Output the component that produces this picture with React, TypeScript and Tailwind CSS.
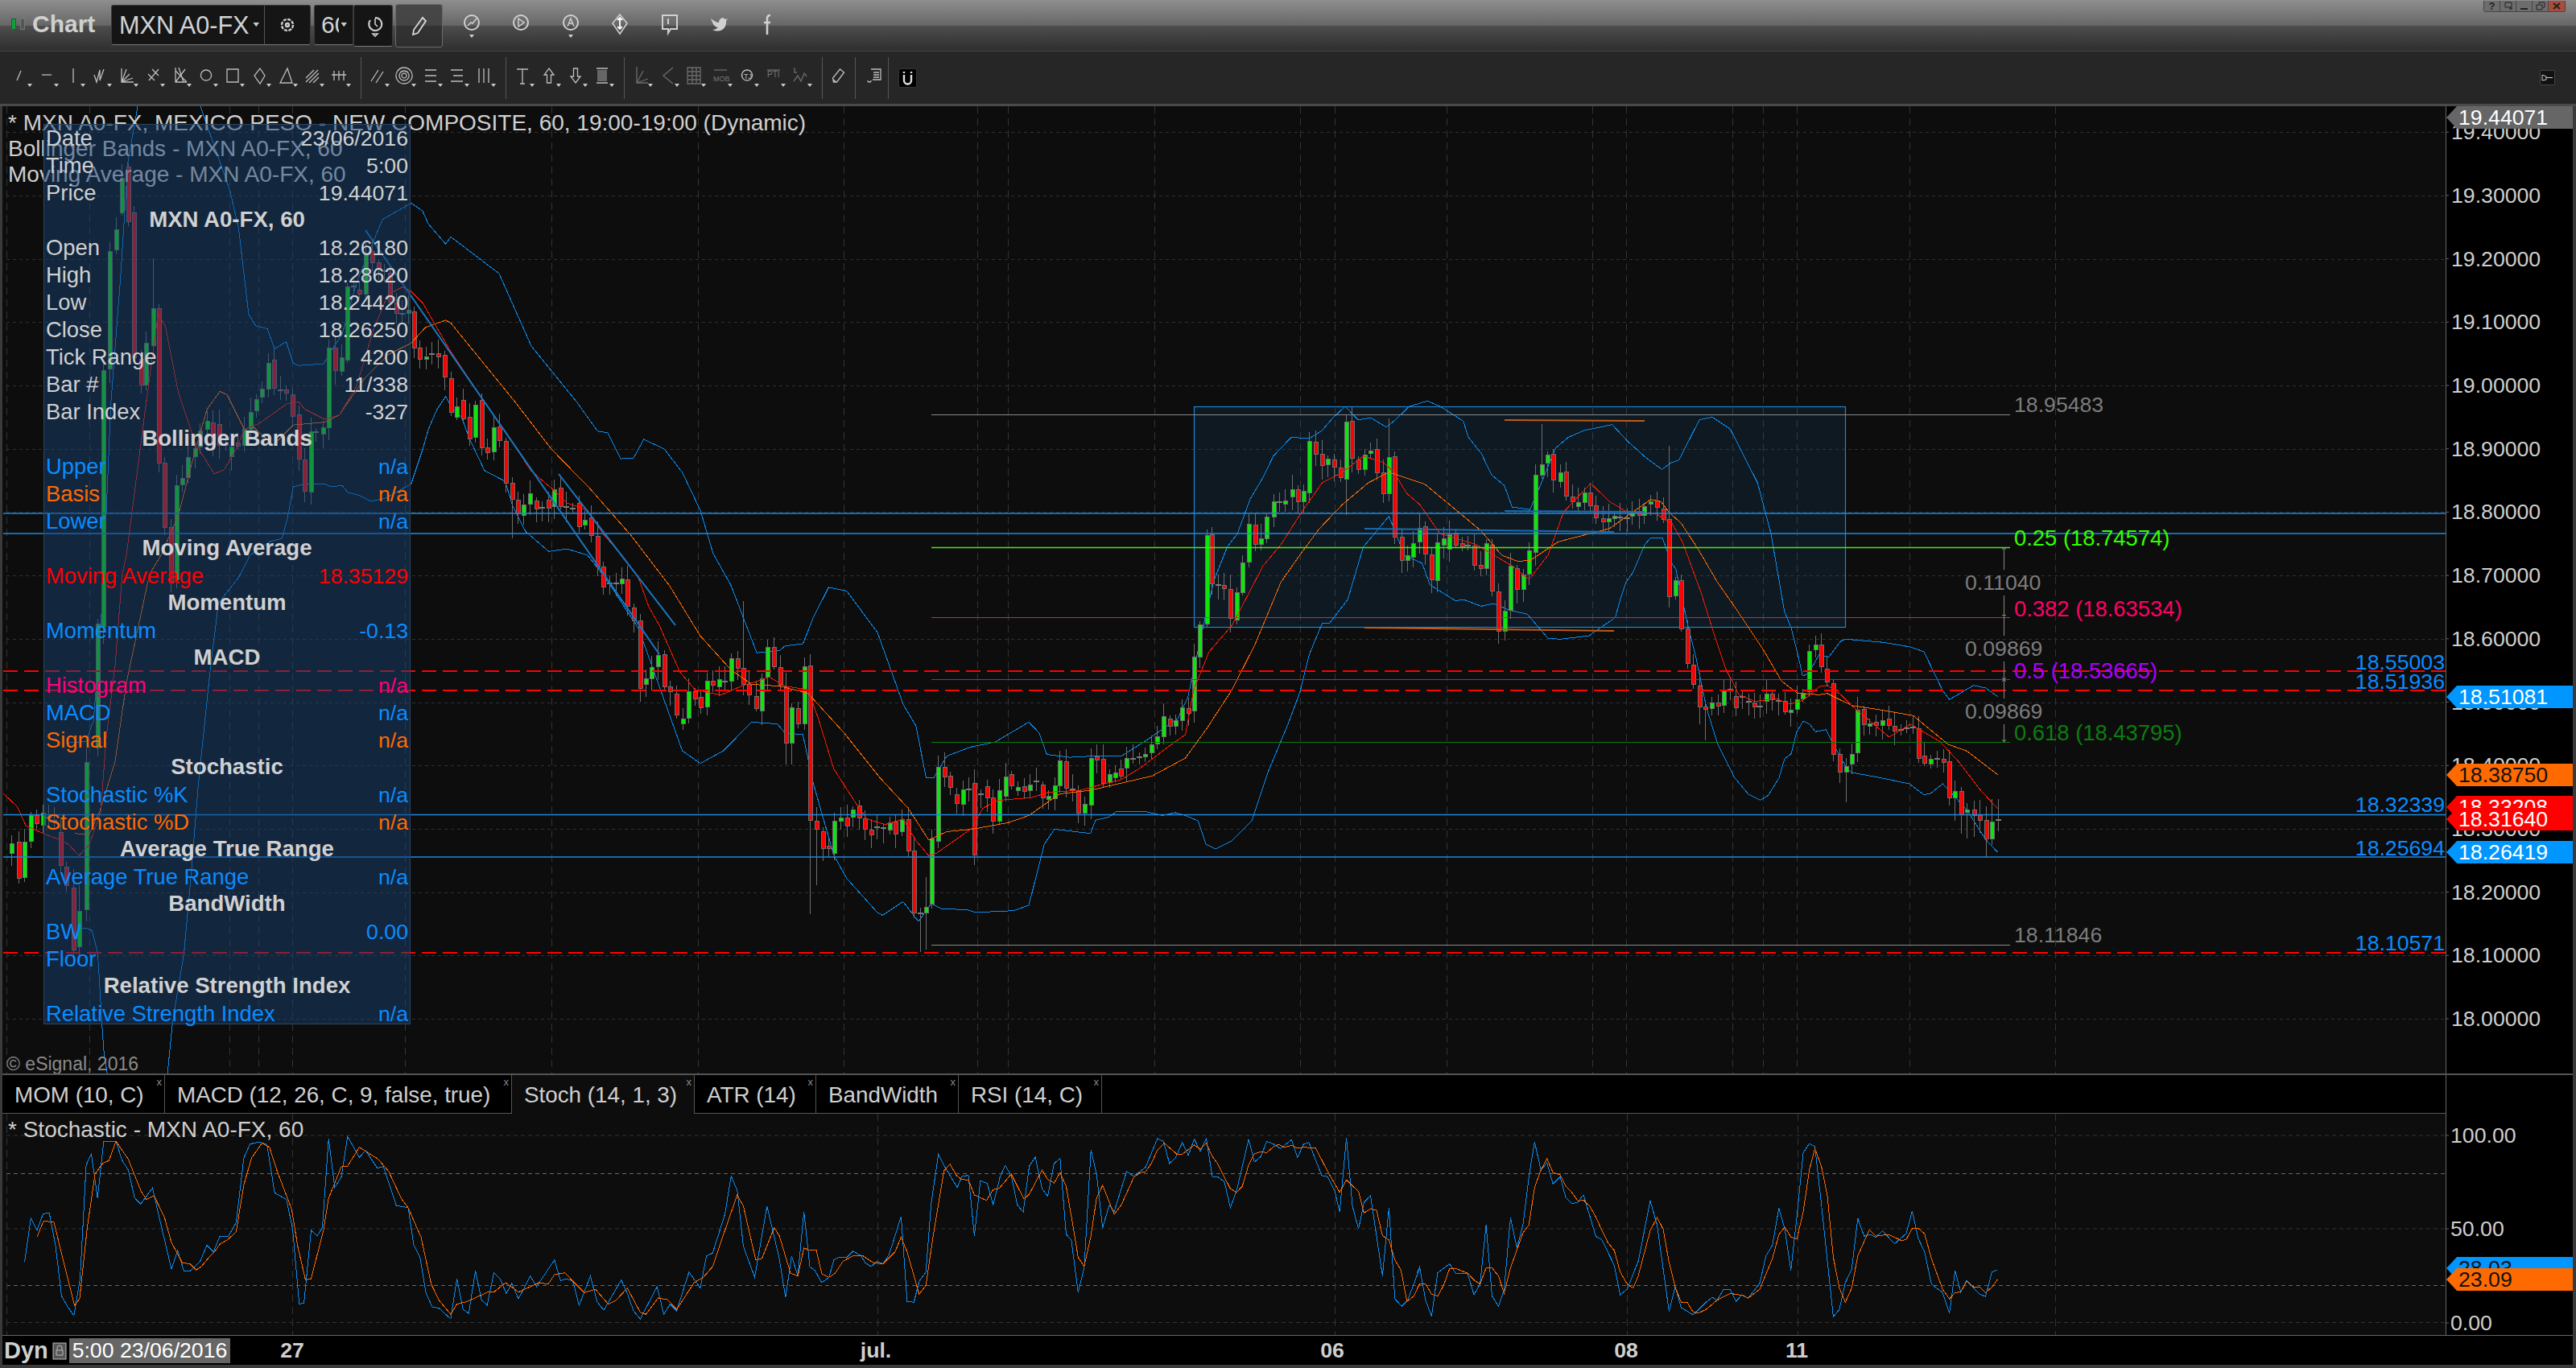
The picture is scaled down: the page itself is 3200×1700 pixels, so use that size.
import React from "react";

const m = (ox: number, oy: number, sx: number, sy: number, a: number[]) => {
  const r: string[] = [];
  for (let i = 0; i + 1 < a.length; i += 2) r.push(`${(ox + a[i] / sx).toFixed(1)},${(oy + a[i + 1] / sy).toFixed(1)}`);
  return r;
};
const Z2 = (a: number[]) => m(0, 130, 2.8, 2.8, a);
const Z3 = (a: number[]) => m(0, 690, 2.8, 2.53, a);
const Z9 = (a: number[]) => m(500, 500, 1.568, 2.24, a);
const Z7 = (a: number[]) => m(1400, 460, 1.568, 3, a);
const Z12 = (a: number[]) => m(2000, 600, 3, 3, a);
const S5 = (a: number[]) => m(0, 1300, 1.568, 3, a);
const S10 = (a: number[]) => m(1000, 1380, 2.01, 3, a);
const S11 = (a: number[]) => m(1760, 1380, 2.01, 3, a);

const upper = [
  ...Z3([235,590,300,585,325,520,345,300,360,80]),
  ...Z2([385,1050,420,590,445,200,480,0]),
  "210,60",
  ...Z2([695,0,800,300,830,430,865,730,890,770,930,780,955,850,995,825,1020,900,1040,908,1125,902,1150,860,1190,800,1240,620,1330,400,1430,343,1470,370,1490,415,1550,485,1568,460]),
  "620,340","660,430",
  ...Z9([340,0,360,40,380,80,400,85,425,157,450,155,470,103,510,130,545,195,580,300,605,420,640,510,690,697,735,690,745,678,780,672,800,600,830,515,865,525,925,640,945,720,975,840,1000,900,1020,1045,1035,1045,1060,985,1105,960,1155,945,1220,890,1240,920,1255,980,1300,988,1340,985,1400,985,1450,940,1510,880,1530,820]),
  ...Z7([140,1030,155,900,170,780,195,660,215,610,240,480,265,400,285,320,320,250,355,255,380,225,400,180,425,135,450,185,475,178,505,212,520,190,550,135,585,115,610,135,655,190,665,250,690,310,710,390,735,430,750,510,785,520,805,430,835,290,860,250,890,225,945,203,975,265,1010,325,1042,370,1060,345,1075,335,1115,185,1140,175,1175,220]),
  ...Z12([550,0,600,190,650,480,675,540,700,640,718,720,740,710,780,640,815,650,860,590,880,583,1020,595,1120,612,1170,630,1240,775,1265,808,1355,755,1400,765,1445,797]),
].join(" ");

const lower = [
  ...Z3([280,1175,300,1172,320,1180,340,1250,355,1480,362,1568]),
  "135,1345","170,1400","207,1345",
  ...Z3([600,1470,640,1250,665,1000,690,720,730,370,760,150,830,70,870,0]),
  ...Z2([940,1520,980,1510,1000,1440,1020,1330,1060,1320,1130,1320,1150,1330,1190,1325,1210,1350,1250,1360,1290,1380,1340,1370,1430,1320,1470,1200,1490,1130,1520,1060,1550,1015,1568,1050]),
  ...Z9([105,30,115,40,130,100,160,190,200,220,215,290,240,360,285,415,320,408,360,425,380,460,410,520,430,565,460,630,500,790,545,970,580,1005,625,970,680,890,730,895,745,920,780,925,800,1060,840,1260,865,1325,925,1420,935,1428,975,1390,1005,1445,1030,1395,1050,1410,1100,1412,1115,1420,1190,1415,1220,1400,1250,1230,1270,1188,1340,1200,1350,1163,1375,1155,1390,1140,1450,1140,1480,1150,1505,1142,1525,1150,1550,1165,1565,1230]),
  "1510,1055","1530,1045","1555,1020","1575,960","1600,900",
  ...Z7([337,1200,355,1060,380,945,395,942,430,855,460,660,510,545,520,590,540,690,575,720,590,800,640,860,655,855,690,880,715,870,745,895,780,910,820,1000,845,1003,900,990,945,930]),
  ...Z12([20,500,40,430,60,370,85,335,130,230,150,207,195,205,230,300,245,320,290,530,320,650,360,840,400,970,465,1100,515,1160,560,1183,590,1165,630,1100,650,1030,675,1010,695,930,720,888,745,900,765,928,805,920,835,980,880,1060,900,1080,1000,1098,1115,1122,1170,1163,1195,1158,1240,1122,1285,1170,1330,1220,1400,1330,1445,1378]),
].join(" ");

const redMA = [
  ...Z3([12,750,60,790,90,850,150,875,210,895,240,910,275,945,310,910,350,810,370,570,400,350,425,60]),
  ...Z2([440,1568,500,1100,550,730,575,770,620,1000,680,1180,745,1285,780,1270,820,1200,850,1130,900,1110,1000,1040,1040,1035,1060,1060,1130,1095,1180,1080,1240,980,1300,780,1350,660,1400,635,1430,650,1470,690,1568,860]),
  ...Z9([160,0,200,80,250,190,295,245,320,280,360,300,390,365,430,430,460,490,480,570,500,620,540,750,570,800,620,815,660,790,715,765,745,790,790,800,810,880,840,1020,885,1120,905,1160,940,1175,975,1160,1000,1220,1025,1262,1040,1255,1110,1185,1130,1130,1160,1108,1225,1100,1260,1085,1320,1080,1345,1070,1400,1050,1440,1015,1490,960,1525,925]),
  ...Z7([130,1190,160,1050,205,950,265,730,300,650,340,530,380,420,420,380,460,320,500,345,520,380,545,460,570,500,610,610,680,650,750,730,783,780,820,690,850,530,903,422,940,490,975,530,1030,535,1050,560]),
  ...Z12([230,150,270,220,340,410,380,540,430,690,480,790,540,815,620,805,670,825,720,810,780,760,810,755,860,790,900,830,1040,948,1120,900,1230,965,1300,1040,1380,1145,1445,1215]),
].join(" ");

const orangeMA = [
  ...Z3([260,875,310,878,345,810,400,650,440,400,520,60,560,0]),
  ...Z2([620,1430,680,1200,720,1060,765,998,790,1010,850,1130,880,1120,950,1185,1020,1115,1130,1105,1180,1080,1270,950,1350,870,1430,830,1480,775,1550,750,1568,760]),
  ...Z9([220,0,290,130,365,240,445,370,520,510,580,650,640,745,680,785,735,790,790,810,860,920,930,1045,985,1130,1025,1218,1060,1195,1110,1188,1180,1170,1220,1150,1280,1090,1340,1080,1460,1040,1525,990,1568,905]),
  ...Z7([205,1190,250,1020,300,790,340,680,375,590,420,500,470,420,510,380,580,425,640,520,690,600,730,690,760,712,785,710,840,640,940,590,1020,482,1040,490]),
  ...Z12([220,110,265,150,330,250,400,370,470,470,570,620,640,740,700,785,780,790,810,785,900,830,1000,845,1130,868,1260,975,1330,1000,1445,1088]),
].join(" ");

const stochK = [
  ...S5([48,808,60,645,72,690,84,628,96,625,108,745,120,935,132,975,144,1008,156,870,168,445,178,405,190,570,202,358,226,358,238,430,250,465,262,568,274,592,297,532,310,640,334,835,346,765,358,840,370,842,390,805,403,745,416,770,428,712,445,712,460,660,475,420,487,368,505,360,520,370,535,550,558,575,570,685,583,965,592,960,606,690,618,710,628,680,640,348,652,530,665,490,677,340,700,418,712,392,735,458,747,452,772,598,795,605,806,745,818,790,830,925,842,975,855,980,878,1020,890,870,902,985,913,1000,926,840,938,950,949,968,962,848,974,870,986,925,997,888,1010,945,1033,860,1045,900,1080,800,1092,878,1104,870,1116,880,1128,970,1150,860,1163,955,1176,988,1210,875,1222,925,1234,990,1247,1020,1280,900,1293,1003,1305,965,1318,990,1342,845,1364,905,1376,785,1388,775,1412,630,1424,488,1436,540,1448,750,1470,865,1494,600,1518,795,1530,940,1542,785,1554,860,1566,620]),
  ...S10([12,585,25,600,42,645,60,625,72,560,85,550,105,550,120,527,140,545,150,570,165,585,180,565,195,575,210,540,240,398,255,715,272,718,285,640,302,605,315,350,333,167,350,215,380,290,392,248,408,245,423,470,438,265,455,275,470,355,487,250,500,208,515,245,530,355,545,382,560,210,575,177,592,295,606,322,622,200,637,182,652,465,665,485,682,680,697,590,714,150,728,240,743,440,760,355,772,380,803,230,820,248,850,215,880,108,895,118,910,200,925,180,942,122,957,170,972,110,987,155,1002,108,1017,250,1030,250,1047,268,1062,365,1078,300,1108,110,1122,195,1138,175,1153,118,1170,128,1187,145,1215,112,1230,178,1245,128,1258,122,1290,245,1305,250,1322,300,1335,380,1352,105,1367,360,1382,445,1396,345,1412,320,1442,620,1458,365,1473,705,1490,733,1505,710,1535,590]),
  ...S11([0,610,7,587,22,710,37,770,52,608,82,575,97,610,127,612,143,690,158,650,173,430,188,695,204,733,218,670,234,403,250,515,265,430,280,250,294,120,310,225,325,198,340,277,358,250,372,328,388,350,402,345,416,317,447,472,462,485,493,580,508,690,525,670,553,565,583,340,600,430,630,752,645,660,660,738,690,765,722,718,738,700,750,710,766,670,782,670,797,715,812,690,827,703,856,648,872,545,888,505,904,367,919,445,934,600,949,400,965,160,980,127,994,137,1010,350,1040,772,1055,745,1070,645,1086,595,1101,405,1117,472,1130,465,1146,475,1163,452,1193,500,1222,462,1237,378,1252,480,1268,530,1285,650,1313,682,1330,758,1344,600,1358,680,1373,637,1405,687,1420,697,1436,605,1450,598]),
].join(" ");

const stochD = [
  ...S5([72,715,85,655,105,660,130,855,145,970,155,945,170,680,185,480,200,440,212,430,226,358,250,425,275,545,285,575,300,560,320,640,334,735,355,810,370,815,382,838,392,825,405,795,418,770,428,742,445,722,460,695,475,520,490,420,510,365,525,380,540,470,568,610,580,750,595,875,606,870,630,690,640,570,665,452,677,450,700,380,715,398,737,425,757,470,782,572,795,605,820,715,840,890,855,950,878,1003,890,965,910,955,950,920,962,920,985,885,1010,920,1050,885,1068,890,1080,855,1100,848,1138,922,1160,910,1185,965,1200,950,1222,905,1247,995,1258,1003,1282,942,1300,948,1318,985,1352,885,1370,865,1388,825,1412,690,1436,558,1448,600,1472,800,1484,795,1508,680,1518,710,1540,850,1554,860,1566,755]),
  ...S10([12,525,28,522,42,612,60,625,75,610,95,565,120,545,145,545,170,570,195,575,225,530,240,475,255,530,285,688,302,655,320,470,347,228,362,203,378,245,392,260,408,262,423,318,453,338,470,298,485,293,515,240,530,285,547,333,560,315,592,225,606,260,622,273,637,235,652,285,670,440,682,550,697,585,714,470,728,330,743,282,772,390,790,355,820,255,835,235,850,232,865,200,880,150,897,125,928,165,942,165,972,132,987,147,1002,125,1017,175,1030,200,1062,295,1078,308,1092,285,1108,205,1122,165,1138,157,1153,160,1170,138,1182,130,1197,140,1215,133,1230,143,1245,140,1275,143,1305,230,1335,308,1352,262,1382,305,1396,385,1412,370,1427,375,1442,470,1458,485,1473,560,1488,598,1503,715,1520,695,1535,650]),
  ...S11([0,670,7,650,22,650,37,688,52,695,67,655,82,592,97,592,127,610,143,635,158,650,173,590,188,590,204,620,218,685,234,590,265,460,280,430,294,290,310,225,325,182,340,235,358,243,372,285,388,310,402,340,416,338,432,360,447,400,462,450,477,495,493,525,508,605,525,650,540,665,553,620,583,450,600,402,615,445,630,570,645,660,660,718,675,718,690,755,705,757,722,745,750,710,782,685,812,692,827,703,856,670,888,555,904,465,919,438,934,475,949,482,965,380,980,225,994,145,1010,210,1025,320,1040,550,1055,665,1070,718,1086,665,1101,545,1130,448,1146,472,1178,465,1210,488,1222,484,1237,443,1252,442,1268,463,1285,555,1313,670,1330,705,1344,682,1358,680,1373,640,1390,660,1405,660,1420,682,1436,662,1450,633]),
].join(" ");

const CANDLES =
  "14,1048,1060,g 23,1046,1091,r 30,1046,1090,g 38,1013,1045,g 45,1013,1023,r 53,1010,1025,g 60,1012,1020,d 67,1018,1022,d 75,1034,1075,r 82,1077,1100,r 91,1103,1180,r 98,1132,1176,g 107,947,1130,g 121,775,929,g 128,460,779,g 136,312,458,g 144,285,310,g 151,221,264,g 159,207,275,r 166,264,444,r 175,446,478,r 181,426,478,g 190,383,429,g 197,383,575,r 204,575,655,r 212,655,724,r 219,603,720,g 226,594,602,g 233,568,593,g 242,557,567,g 248,535,555,g 257,523,533,g 264,525,553,r 272,527,553,r 280,550,556,d 287,555,567,g 295,550,554,r 303,533,553,g 311,512,533,g 318,496,510,g 325,483,493,g 333,451,483,g 340,447,482,r 348,484,486,d 355,484,488,r 363,490,517,r 371,515,570,r 378,571,610,r 386,536,611,g 392,536,538,d 401,531,539,g 408,432,531,g 416,432,460,r 424,444,461,g 431,356,447,g 439,354,357,d 446,360,365,r 454,314,365,g 462,312,326,r 470,326,335,r 477,335,338,d 484,339,375,r 492,376,389,r 499,388,391,d 507,385,389,g 514,387,432,r 521,432,446,r 529,443,445,g 536,439,441,d 544,439,443,r 552,441,468,r 560,470,512,r 567,505,518,g 575,497,520,r 583,518,545,r 590,503,543,g 598,497,556,r 605,556,562,r 613,531,561,g 620,530,547,r 628,548,600,r 636,600,620,r 643,621,638,r 650,627,640,g 658,613,626,g 666,622,632,r 673,630,632,d 681,621,631,r 688,608,629,g 696,606,629,r 703,629,631,d 711,631,633,d 719,625,654,r 726,646,652,g 734,643,665,r 742,666,704,r 749,704,729,r 757,724,726,d 765,724,726,d 772,719,725,g 779,720,753,r 787,755,771,r 795,771,855,r 802,843,850,g 809,829,843,g 817,814,828,g 825,813,853,r 832,853,859,r 840,862,888,r 848,893,899,g 855,859,892,g 863,859,868,r 870,866,879,r 878,846,878,g 885,846,851,r 893,844,853,g 900,846,848,d 908,818,846,g 916,818,830,r 923,830,850,r 930,850,863,r 939,865,880,r 946,843,883,g 953,804,841,g 961,804,828,r 969,829,851,r 976,853,923,r 983,879,923,g 991,880,899,r 999,828,899,g 1006,827,1019,r 1014,1020,1030,r 1022,1033,1054,r 1029,1051,1054,r 1036,1020,1060,g 1044,1016,1020,g 1052,1016,1026,r 1059,1006,1015,g 1067,1001,1016,r 1074,1017,1030,r 1082,1031,1037,r 1089,1027,1029,d 1097,1028,1030,d 1105,1022,1031,g 1112,1021,1036,r 1120,1018,1033,g 1128,1018,1057,r 1135,1057,1134,r 1143,1134,1136,d 1150,1127,1134,g 1157,1042,1123,g 1165,953,1045,g 1173,953,965,r 1180,964,978,r 1188,987,998,r 1196,981,999,g 1203,980,982,d 1210,973,1062,r 1218,986,988,d 1226,977,991,r 1233,991,1020,r 1241,982,1020,g 1249,965,989,g 1256,962,976,r 1264,978,982,g 1272,977,983,r 1279,975,982,g 1287,970,972,d 1295,975,991,r 1302,989,993,g 1310,976,992,g 1316,945,976,g 1324,946,979,r 1332,980,982,d 1339,982,1010,r 1347,999,1010,g 1355,942,1000,g 1362,940,944,r 1370,943,973,r 1378,962,972,g 1385,960,966,g 1392,955,964,r 1399,942,954,g 1407,942,944,d 1415,940,942,d 1422,937,940,g 1430,925,935,g 1437,915,924,g 1445,890,915,g 1453,893,902,r 1460,895,902,g 1468,879,895,g 1476,880,886,r 1483,816,883,g 1490,776,816,g 1499,665,775,g 1505,664,725,r 1513,726,728,d 1520,727,731,r 1528,732,768,r 1536,736,770,g 1543,699,736,g 1551,651,698,g 1559,652,676,r 1566,669,676,g 1573,642,669,g 1582,623,642,g 1589,623,625,d 1596,622,626,g 1605,608,617,g 1612,608,623,r 1619,610,623,g 1626,548,612,g 1634,549,564,r 1642,564,578,r 1649,570,577,g 1657,571,580,r 1665,581,593,r 1672,524,595,g 1679,523,569,r 1687,571,583,r 1695,565,583,g 1702,560,563,g 1710,558,587,r 1718,587,613,r 1725,568,613,g 1732,567,667,r 1741,667,696,r 1748,690,696,g 1755,675,692,g 1763,656,673,g 1770,654,688,r 1778,689,720,r 1785,674,721,g 1793,669,677,g 1800,664,682,g 1808,662,677,r 1816,675,679,r 1823,677,679,d 1831,678,702,r 1839,702,706,r 1846,675,706,g 1853,677,734,r 1861,735,784,r 1869,759,784,g 1876,703,758,g 1884,706,732,r 1892,714,732,g 1899,684,713,g 1907,590,686,g 1915,577,590,g 1922,565,575,g 1929,564,596,r 1938,587,598,g 1945,586,616,r 1953,617,623,r 1960,624,629,g 1968,612,624,g 1975,612,628,r 1982,628,643,r 1991,644,648,r 1998,644,648,g 2005,641,644,g 2012,642,644,d 2021,643,645,d 2027,637,641,g 2036,637,640,r 2042,629,640,g 2050,623,626,g 2058,622,630,r 2066,632,645,r 2073,645,741,r 2081,721,740,g 2088,721,781,r 2096,781,824,r 2103,826,850,r 2111,852,878,r 2118,878,880,r 2126,873,880,g 2134,873,877,r 2141,857,876,g 2149,856,858,d 2156,865,879,r 2164,865,867,d 2172,871,873,d 2179,873,878,r 2186,877,879,d 2194,862,871,g 2201,862,869,r 2209,870,872,d 2217,871,884,r 2224,882,885,g 2232,869,881,g 2239,861,868,g 2247,809,859,g 2255,801,807,g 2262,801,828,r 2269,831,847,r 2277,849,937,r 2285,937,959,r 2293,952,959,g 2300,937,949,g 2307,882,935,g 2315,881,900,r 2322,899,901,g 2330,897,901,r 2338,895,901,g 2346,893,901,r 2353,902,908,r 2361,906,908,d 2368,904,906,d 2376,903,905,d 2383,905,942,r 2390,939,948,r 2398,943,949,g 2406,942,944,d 2414,943,947,r 2421,946,991,r 2428,983,991,g 2436,983,1012,r 2443,1006,1009,g 2452,1006,1013,r 2459,1013,1019,r 2467,1019,1042,r 2474,1021,1042,g 2482,1018,1020,d";

const WICKS: Record<number, [number?, number?]> = {
  190: [321], 923: [747], 1006: [undefined, 1136], 1143: [undefined, 1183], 1150: [1090, 1180], 2073: [554, 755], 1915: [527], 2285: [undefined, 973], 2293: [undefined, 997], 2118: [undefined, 920], 2111: [undefined, 900], 2467: [undefined, 1065], 2474: [993, 1050], 2482: [993, 1033], 2436: [undefined, 1036], 2443: [undefined, 1042], 2452: [undefined, 1040], 2459: [994], 2428: [970, 1020], 636: [undefined, 669], 976: [undefined, 950], 983: [undefined, 950], 1014: [undefined, 1100], 1022: [undefined, 1070], 128: [undefined, 800], 107: [930, 1145], 121: [undefined, 940], 91: [1080, 1195], 98: [1100, 1195], 1679: [505], 1672: [515, 640], 1725: [520], 1861: [undefined, 800], 1884: [undefined, 750], 2012: [625, 660],
};

const candles = CANDLES.split(" ").map((s) => {
  const [x, t, b, c] = s.split(",");
  return { x: +x, t: +t, b: +b, c };
});

const wick = (x: number) => {
  const h = (x * 2654435761) >>> 0;
  return [4 + (h % 15), 4 + ((h >>> 8) % 15)];
};

const Candles = () => (
  <g shapeRendering="crispEdges">
    {candles.map(({ x, t, b, c }) => {
      const [up, dn] = wick(x);
      const o = WICKS[x] || [];
      const hi = o[0] ?? t - up;
      const lo = o[1] ?? b + dn;
      return (
        <g key={x}>
          <line x1={x + 0.5} x2={x + 0.5} y1={hi} y2={lo} stroke="#6e6e6e" />
          {c === "d" ? (
            <rect x={x - 3} y={(t + b) / 2 - 1} width={7} height={2} fill="#7a7a7a" />
          ) : (
            <rect x={x - 2} y={t} width={5} height={Math.max(b - t, 3)} fill={c === "g" ? "#0ce60c" : "#ff0000"} stroke="#6e6e6e" strokeWidth={1} />
          )}
        </g>
      );
    })}
  </g>
);

const yP = (p: number) => 479 + (19 - p) * 787;
const V_MAIN = [8, 111, 285, 321, 363, 503, 685, 867, 1048, 1214, 1252, 1434, 1615, 1658, 1797, 1978, 2020, 2152, 2190, 2232, 2372, 2553];
const H_MAIN = [19.4, 19.3, 19.2, 19.1, 19, 18.9, 18.8, 18.7, 18.6, 18.5, 18.4, 18.3, 18.2, 18.1, 18];

const T = ({ x, y, c, children, anchor, fs = 26.67 }: { x: number; y: number; c: string; children: React.ReactNode; anchor?: "end" | "middle"; fs?: number }) => (
  <text x={x} y={y} fill={c} fontSize={fs} dominantBaseline="central" textAnchor={anchor}>
    {children}
  </text>
);

const Poly = ({ p, c }: { p: string; c: string }) => <polyline points={p} fill="none" stroke={c} strokeWidth={1} shapeRendering="crispEdges" />;

const MainChart = () => (
  <svg width={3035} height={1202} viewBox="3 132 3035 1202" className="block">
    {H_MAIN.map((p) => (
      <line key={p} x1={8} x2={3038} y1={Math.round(yP(p)) + 0.5} y2={Math.round(yP(p)) + 0.5} stroke="#303030" strokeDasharray="4 4" />
    ))}
    {V_MAIN.map((x) => (
      <line key={x} x1={x + 0.5} x2={x + 0.5} y1={132} y2={1334} stroke="#333" strokeDasharray="9 6" />
    ))}
    <rect x={1483.5} y={505.5} width={809} height={274} fill="#1e6eaa" fillOpacity={0.13} stroke="#1c86d8" strokeWidth={1.2} />
    <Poly p={lower} c="#0a8cf0" />
    <Poly p={upper} c="#0a8cf0" />
    <Candles />
    <Poly p={orangeMA} c="#ff6a00" />
    <Poly p={redMA} c="#ff1a00" />
    {[638, 663, 1012.5, 1065].map((y) => (
      <line key={y} x1={4} x2={3038} y1={y} y2={y} stroke="#1a8ae6" strokeWidth={1.3} />
    ))}
    {[834, 858, 1184].map((y) => (
      <line key={y} x1={4} x2={3038} y1={y} y2={y} stroke="#ff0000" strokeWidth={2} strokeDasharray="18 8" />
    ))}
    <line x1={454} y1={286} x2={819} y2={813} stroke="#1a76c0" strokeWidth={2} />
    <line x1={694} y1={589} x2={839} y2={777} stroke="#1a76c0" strokeWidth={2} />
    <line x1={1869} y1={522} x2={2043} y2={523} stroke="#c05a18" strokeWidth={2} />
    <line x1={1695} y1={780} x2={2005} y2={784} stroke="#c05a18" strokeWidth={2} />
    <line x1={1695} y1={657} x2={2005} y2={661} stroke="#1a6cae" strokeWidth={2} />
    <line x1={1869} y1={635} x2={2043} y2={636} stroke="#1a6cae" strokeWidth={2} />
    <line x1={1157} x2={2497} y1={515.5} y2={515.5} stroke="#8a8a8a" />
    <line x1={1157} x2={2497} y1={680.5} y2={680.5} stroke="#44ee10" strokeWidth={1.4} />
    <line x1={1157} x2={2497} y1={767.5} y2={767.5} stroke="#d01e70" strokeWidth={1.2} />
    <line x1={1157} x2={2497} y1={844.5} y2={844.5} stroke="#a010e0" strokeWidth={1.2} />
    <line x1={1157} x2={2497} y1={922.5} y2={922.5} stroke="#0e7a10" strokeWidth={1.2} />
    <line x1={1157} x2={2497} y1={1174.5} y2={1174.5} stroke="#8a8a8a" />
    <path d="M2489.5 680V708M2489.5 740V790M2489.5 822V868M2489.5 900V922M2487 683l2.5-3 2.5 3M2487 764.5h5M2487 842l5 5M2492 842l-5 5M2487 919l2.5 3 2.5-3" stroke="#8a8a8a" fill="none" />
    <T x={2502} y={503} c="#7c7c7c">18.95483</T>
    <T x={2502} y={668} c="#33ff00" fs={27.4}>0.25 (18.74574)</T>
    <T x={2441} y={724} c="#7c7c7c">0.11040</T>
    <T x={2502} y={756} c="#ff0066" fs={27.4}>0.382 (18.63534)</T>
    <T x={2441} y={806} c="#7c7c7c">0.09869</T>
    <T x={2502} y={833} c="#aa00ff" fs={27.4}>0.5 (18.53665)</T>
    <T x={2441} y={884} c="#7c7c7c">0.09869</T>
    <T x={2502} y={910} c="#0b7d10" fs={27.4}>0.618 (18.43795)</T>
    <T x={2502} y={1162} c="#7c7c7c">18.11846</T>
    <T x={3037} y={823} c="#0a8cff" anchor="end">18.55003</T>
    <T x={3037} y={847} c="#0a8cff" anchor="end">18.51936</T>
    <T x={3037} y={1000} c="#0a8cff" anchor="end">18.32339</T>
    <T x={3037} y={1054} c="#0a8cff" anchor="end">18.25694</T>
    <T x={3037} y={1172} c="#0a8cff" anchor="end">18.10571</T>
  </svg>
);

const Tag = ({ c, bg, fg, children }: { c: number; bg: string; fg: string; children: React.ReactNode }) => (
  <g>
    <polygon points={`3039,${c} 3052,${c - 14} 3196,${c - 14} 3196,${c + 14} 3052,${c + 14}`} fill={bg} />
    <T x={3054} y={c} c={fg}>{children}</T>
  </g>
);

const PriceAxis = () => (
  <svg width={158} height={1202} viewBox="3038 132 158 1202" className="block bg-black">
    <line x1={3038.5} x2={3038.5} y1={132} y2={1334} stroke="#666" />
    {H_MAIN.map((p) => (
      <g key={p}>
        <line x1={3038} x2={3042} y1={yP(p)} y2={yP(p)} stroke="#666" />
        <T x={3045} y={yP(p)} c="#cfcfcf">{p.toFixed(5)}</T>
      </g>
    ))}
    <Tag c={146} bg="#666666" fg="#ffffff">19.44071</Tag>
    <Tag c={866} bg="#0096ff" fg="#ffffff">18.51081</Tag>
    <Tag c={963} bg="#ff6a00" fg="#111111">18.38750</Tag>
    <Tag c={1003} bg="#ff0000" fg="#ffffff">18.33208</Tag>
    <Tag c={1018} bg="#ff0000" fg="#ffffff">18.31640</Tag>
    <Tag c={1059} bg="#0096ff" fg="#ffffff">18.26419</Tag>
  </svg>
);

const StochChart = () => (
  <svg width={3035} height={275} viewBox="3 1385 3035 275" className="block">
    {[[1412, "#333"], [1459.5, "#666"], [1528, "#333"], [1598.5, "#666"], [1644.5, "#333"]].map(([y, s]) => (
      <line key={y as number} x1={8} x2={3038} y1={y as number} y2={y as number} stroke={s as string} strokeDasharray="5 4" />
    ))}
    {[8, 363, 1090, 1658, 2021, 2233, 2553].map((x) => (
      <line key={x} x1={x + 0.5} x2={x + 0.5} y1={1385} y2={1660} stroke="#333" strokeDasharray="9 6" />
    ))}
    <Poly p={stochK} c="#0a8cf0" />
    <Poly p={stochD} c="#ff6a00" />
  </svg>
);

const StochAxis = () => (
  <svg width={158} height={275} viewBox="3038 1385 158 275" className="block bg-black">
    <line x1={3038.5} x2={3038.5} y1={1385} y2={1660} stroke="#666" />
    {[[1412, "100.00"], [1528, "50.00"], [1645, "0.00"]].map(([y, s]) => (
      <g key={s as string}>
        <line x1={3038} x2={3042} y1={y as number} y2={y as number} stroke="#666" />
        <T x={3044} y={y as number} c="#cfcfcf">{s}</T>
      </g>
    ))}
    <Tag c={1577} bg="#0096ff" fg="#111111">28.03</Tag>
    <Tag c={1591} bg="#ff6a00" fg="#111111">23.09</Tag>
  </svg>
);

type Row = { h?: string; l?: string; v?: string; c?: string };
const BLUE = "text-[#0a8cff]";
const ORANGE = "text-[#ff6a00]";
const RED = "text-[#ff0000]";
const PINK = "text-[#ff0078]";
const ROWS: Row[] = [
  { l: "Date", v: "23/06/2016" },
  { l: "Time", v: "5:00" },
  { l: "Price", v: "19.44071" },
  { h: "MXN A0-FX, 60" },
  { l: "Open", v: "18.26180" },
  { l: "High", v: "18.28620" },
  { l: "Low", v: "18.24420" },
  { l: "Close", v: "18.26250" },
  { l: "Tick Range", v: "4200" },
  { l: "Bar #", v: "11/338" },
  { l: "Bar Index", v: "-327" },
  { h: "Bollinger Bands" },
  { l: "Upper", v: "n/a", c: BLUE },
  { l: "Basis", v: "n/a", c: ORANGE },
  { l: "Lower", v: "n/a", c: BLUE },
  { h: "Moving Average" },
  { l: "Moving Average", v: "18.35129", c: RED },
  { h: "Momentum" },
  { l: "Momentum", v: "-0.13", c: BLUE },
  { h: "MACD" },
  { l: "Histogram", v: "n/a", c: PINK },
  { l: "MACD", v: "n/a", c: BLUE },
  { l: "Signal", v: "n/a", c: ORANGE },
  { h: "Stochastic" },
  { l: "Stochastic %K", v: "n/a", c: BLUE },
  { l: "Stochastic %D", v: "n/a", c: ORANGE },
  { h: "Average True Range" },
  { l: "Average True Range", v: "n/a", c: BLUE },
  { h: "BandWidth" },
  { l: "BW", v: "0.00", c: BLUE },
  { l: "Floor", c: BLUE },
  { h: "Relative Strength Index" },
  { l: "Relative Strength Index", v: "n/a", c: BLUE },
];

const DataWindow = () => (
  <div className="absolute left-[51px] top-[22px] w-[456px] h-[1119px] bg-[rgba(23,63,111,0.5)] border border-[#2a4663]">
    {ROWS.map((r, i) =>
      r.h ? (
        <div key={i} className="h-[34px] flex items-center justify-center pb-[2px] font-bold text-[27.6px] text-[#d0d0d0] leading-none">{r.h}</div>
      ) : (
        <div key={i} className={`h-[34px] flex items-center justify-between pl-[2px] pr-[2px] leading-none ${r.c ?? "text-[#d0d0d0]"}`}>
          <span className="text-[27.4px]">{r.l}</span>
          <span>{r.v}</span>
        </div>
      )
    )}
  </div>
);

const Tri = ({ x = 22, y = 24 }: { x?: number; y?: number }) => <path d={`M${x} ${y}h6l-3 4z`} fill="#c8c8c8" stroke="none" />;

const D: Record<string, string> = {
  line: "M9 20L14 8",
  dash: "M7 13h12",
  vline: "M13 5v18",
  zig: "M6 13l3 9 4-15v13l5-14",
  fan: "M7 5v17h15M7 22l6-16M7 22l10-10M7 22l14-5",
  cross: "M8 20L20 6M12 6l8 8M7 12l8 8",
  fanx: "M8 4v18h14M8 22L20 6M8 8l14 14M12 4l6 18",
  circle: "M13 7a6.5 6.5 0 1 0 .01 0",
  rect: "M6 6h14v16H6z",
  diamond: "M14 5l6 9-6 10-7-10z",
  tri: "M15 5l6 18H6z",
  hatch: "M5 17L15 7M5 22L20 7M9 23L21 11M14 23l7-7",
  fork: "M4 13h18M7 8v12M13 8v12M19 8v12",
  par: "M5 21L14 7M11 23L20 9",
  target: "M13 4a10 10 0 1 0 .01 0M13 8a6 6 0 1 0 .01 0M13 11a3 3 0 1 0 .01 0",
  lines: "M6 7h14M6 14h14M6 21h14",
  lines2: "M5 7h15M8 14h12M5 21h15",
  vlines: "M7 5v18M13 5v18M19 5v18",
  text: "M6 6h14M13 6v18M10 24h6",
  up: "M13 5l6 8h-3.5v10h-5V13H7z",
  down: "M13 23l6-8h-3.5V5h-5v10H7z",
  band: "M6 5h14M6 23h14",
  fan2: "M8 3v20h14M8 23l8-15M8 23l14-5",
  arrowfan: "M20 4L8 14l12 10",
  grid: "M5 4h16v20H5zM5 9h16M5 14h16M5 19h16M11 4v20M16 4v20",
  mob: "M5 7h16",
  wave: "M5 21l5-7 4 7 4-10 3 4M6 4v6h3",
  eraser: "M7 17L16 6l5 4-9 12H8z M11 22l-3-3",
  notes: "M9 6h12v13H11M12 10h7M12 13h7M12 16h7M5 20a2 2 0 1 0 4 0",
};

const Ico = ({ n, dim, dd = true, extra, slot = "w-[33px]", vb = "0 0 33 34", w = 33 }: { n: string; dim?: boolean; dd?: boolean; extra?: React.ReactNode; slot?: string; vb?: string; w?: number }) => (
  <div className={`${slot} h-[34px] shrink-0`}>
    <svg width={w} height={34} viewBox={vb} fill="none" stroke={dim ? "#6c6c6c" : "#bdbdbd"} strokeWidth={1.3}>
      <path d={D[n]} />
      {extra}
      {dd && <Tri />}
    </svg>
  </div>
);

const Sep = () => <div className="w-px h-[52px] bg-[#555] mx-[7px] shrink-0" />;

const ToolBar = () => (
  <div className="h-[65px] flex items-center pl-[12px] pr-[26px] bg-[#262626]">
    {["line", "dash", "vline", "zig", "fan", "cross", "fanx", "circle", "rect", "diamond", "tri", "hatch", "fork"].map((n) => <Ico key={n} n={n} />)}
    <Sep />
    {["par", "target", "lines", "lines2", "vlines"].map((n) => <Ico key={n} n={n} />)}
    <Sep />
    {["text", "up", "down"].map((n) => <Ico key={n} n={n} />)}
    <Ico n="band" extra={<rect x={7} y={7} width={12} height={14} fill="#666" stroke="none" />} />
    <Sep />
    <Ico n="fan2" dim />
    <Ico n="arrowfan" dim />
    <Ico n="grid" dim />
    <Ico n="mob" dim extra={<text x={4} y={21} fontSize={9} fill="#777" stroke="none">MOB</text>} />
    <Ico n="circle" extra={<text x={9} y={18} fontSize={9} fill="#bbb" stroke="none">TJ</text>} />
    <Ico n="mob" dim extra={<text x={5} y={16} fontSize={10} fill="#777" stroke="none">PTI</text>} />
    <Ico n="wave" dim />
    <Sep />
    <Ico n="eraser" dd={false} slot="w-[25px]" w={25} vb="1.500 0 25 34" />
    <div className="w-px h-[52px] bg-[#555] mx-[8px] shrink-0" />
    <Ico n="notes" dd={false} slot="w-[30px]" w={30} vb="-2 0 30 34" />
    <div className="w-px h-[52px] bg-[#555] ml-[2px] mr-[12px] shrink-0" />
    <div className="w-[23px] h-[24px] rounded-[2px] bg-black border border-[#333] flex items-center justify-center">
      <svg width={15} height={18} viewBox="0 0 15 18" fill="none" stroke="#ddd" strokeWidth={2.4}>
        <path d="M3 5v7a4.5 4.5 0 0 0 9 0V5" />
        <path d="M3 1v2M12 1v2" />
      </svg>
    </div>
    <div className="ml-auto w-[19px] h-[19px] rounded-[2px] bg-[#111] border border-[#444] flex items-center justify-center">
      <svg width={15} height={11} viewBox="0 0 15 11" fill="none" stroke="#ccc">
        <path d="M1 2l5 2V8L1 9zM6 5.5h8" />
      </svg>
    </div>
  </div>
);

const RoundIcon = ({ children, dd = true }: { children?: React.ReactNode; dd?: boolean }) => (
  <div className="w-[61.5px] flex justify-center">
    <svg width={26} height={34} viewBox="0 0 26 34" fill="none" stroke="#d0d0d0" strokeWidth={2}>
      {children}
      {dd && <path d="M10 28h6l-3 4z" fill="#d0d0d0" stroke="none" />}
    </svg>
  </div>
);

const TitleBar = () => (
  <div className="h-[64px] relative flex items-start bg-[linear-gradient(180deg,#8e8e8e_0%,#666666_50%,#4d4d4d_50%,#2f2f2f_98%,#444444_98%)] text-[#d0d0d0]">
    <div className="flex gap-[5px] ml-[14px] mt-[23px] w-[22px]">
      <div className="w-[6px] h-[14px] bg-[#10a040] border border-[#0a6a2a]" />
      <div className="w-[6px] h-[14px] bg-[#555] border border-[#777]" />
    </div>
    <div className="ml-[4px] mt-[12px] w-[98px] text-[30px] font-bold leading-[36px]">Chart</div>
    <div className="mt-[6px] h-[50px] w-[248px] flex items-center bg-[#151515] rounded-[3px] border border-[#3a3a3a] border-b-[#777]">
      <div className="pl-[9px] w-[176px] text-[30.6px] leading-none whitespace-nowrap text-[#cfd3d6]">MXN A0-FX</div>
      <svg width={12} height={6} viewBox="0 0 6 4" className="-ml-[2px]"><path d="M0 0h5L2.500 3.500z" fill="#ccc" /></svg>
      <div className="ml-[3px] w-[1px] h-full bg-[#555]" />
      <div className="flex-1 flex justify-center">
        <svg width={24} height={24} viewBox="0 0 24 24" fill="none" stroke="#d0d0d0" strokeWidth={2.4}>
          <circle cx={12} cy={12} r={7} strokeDasharray="4 1.500" />
          <circle cx={12} cy={12} r={2} />
        </svg>
      </div>
    </div>
    <div className="ml-[4px] mt-[6px] h-[50px] w-[49px] flex items-center bg-[#151515] rounded-l-[3px] border border-[#3a3a3a] border-b-[#777] overflow-hidden">
      <div className="pl-[8px] w-[30px] text-[30px] leading-none overflow-hidden whitespace-nowrap text-[#cfd3d6]">60</div>
      <svg width={10} height={6} viewBox="0 0 6 4" className="ml-[2px]"><path d="M0 0h5L2.500 3.500z" fill="#ccc" /></svg>
    </div>
    <div className="mt-[6px] h-[52px] w-[49px] flex items-center justify-center pl-[4px] bg-[#151515] rounded-[3px] border border-[#3a3a3a] border-b-[#777]">
      <svg width={22} height={28} viewBox="0 0 22 28" fill="none" stroke="#d0d0d0" strokeWidth={2}>
        <path d="M11 4a8 8 0 1 1-6 3" />
        <path d="M11 5v7l3 3M8 24h6l-3 3z" strokeWidth={1.6} />
      </svg>
    </div>
    <div className="ml-[3px] mt-[5px] h-[54px] w-[59px] flex items-center justify-center rounded-[3px] border border-[#6a6a6a] bg-[linear-gradient(180deg,#474747_0%,#444444_50%,#333333_50%,#2d2d2d_100%)]">
      <svg width={22} height={28} viewBox="0 0 22 28" fill="none" stroke="#d8d8d8" strokeWidth={1.8}>
        <path d="M15 4l4 4L9 23l-6 2 1-6z" />
      </svg>
    </div>
    <div className="ml-[5px] mt-[15px] flex">
      <RoundIcon><circle cx={13} cy={13} r={9} /><path d="M8 17l4-4 2 1 5-6" strokeWidth={1.5} /></RoundIcon>
      <RoundIcon dd={false}><circle cx={13} cy={13} r={9} /><path d="M10 8l7 5-7 5z" strokeWidth={1.5} /></RoundIcon>
      <RoundIcon><circle cx={13} cy={13} r={9} /><path d="M9 18l4-10 4 10M10.500 14h5" strokeWidth={1.4} /></RoundIcon>
      <RoundIcon dd={false}><path d="M13 3l9 11-9 13L4 14z" strokeWidth={1.6} /><path d="M13 7v14M10 10l3-3 3 3M10 18l3 3 3-3" stroke="#fff" strokeWidth={1.8} /></RoundIcon>
      <RoundIcon dd={false}><path d="M4 4h18v17H14l-3 5v-5H4zM11 8v7" /></RoundIcon>
      <RoundIcon dd={false}><path d="M3 8c5 4 8 5 10 5 0-5 5-8 8-4l3-1-2 3c1 8-6 16-17 11 3 0 5-1 7-3-5 0-7-6-9-11z" fill="#d0d0d0" stroke="none" /></RoundIcon>
      <RoundIcon dd={false}><path d="M15 4c-3 0-4 2-4 4v20M7 13h8" strokeWidth={2.6} /></RoundIcon>
    </div>
    <div className="absolute right-[13px] top-[1px] flex h-[14px] rounded-b-[3px] overflow-hidden border border-[#444] border-t-0">
      <div className="w-[20px] bg-[#6d6d6d] border-r border-[#444] text-[13px] font-bold leading-[13px] text-center text-[#222]">?</div>
      <div className="w-[20px] bg-[#6d6d6d] border-r border-[#444] flex items-center justify-center">
        <svg width={12} height={11} viewBox="0 0 12 11" fill="none" stroke="#222"><path d="M2 1h8v6H2zM7 8h4L9 10z" /></svg>
      </div>
      <div className="w-[20px] bg-[#6d6d6d] border-r border-[#444] flex items-end justify-center pb-[2px]"><div className="w-[9px] h-[2px] bg-[#222]" /></div>
      <div className="w-[20px] bg-[#6d6d6d] border-r border-[#444] flex items-center justify-center">
        <svg width={12} height={11} viewBox="0 0 12 11" fill="none" stroke="#222"><path d="M1 4h7v6H1zM4 3V1h7v6H9" /></svg>
      </div>
      <div className="w-[20px] bg-[#a84c3c] flex items-center justify-center">
        <svg width={10} height={9} viewBox="0 0 10 9" fill="none" stroke="#222" strokeWidth={2}><path d="M1 1l8 7M9 1L1 8" /></svg>
      </div>
    </div>
  </div>
);

const TABS = [
  { t: "MOM (10, C)", w: "w-[202px]" },
  { t: "MACD (12, 26, C, 9, false, true)", w: "w-[431px]" },
  { t: "Stoch (14, 1, 3)", w: "w-[227px]", a: true },
  { t: "ATR (14)", w: "w-[151px]" },
  { t: "BandWidth", w: "w-[177px]" },
  { t: "RSI (14, C)", w: "w-[178px]" },
];

const Tabs = () => (
  <div className="h-[50px] flex bg-black border-t-[2px] border-[#555]">
    <div className="flex w-[3035px] border-b border-[#555]">
      {TABS.map((x) => (
        <div key={x.t} className={`relative ${x.w} h-[49px] flex items-center pl-[15px] whitespace-nowrap border-r border-[#555] text-[27.8px] text-[#cfcfcf] ${x.a ? "bg-[#0d0d0d]" : ""}`}>
          {x.t}
          <span className="absolute right-[3px] top-[2px] text-[13px] leading-none text-[#888]">x</span>
        </div>
      ))}
    </div>
    <div className="w-[158px] border-l border-[#666]" />
  </div>
);

const DateAxis = () => (
  <div className="h-[37px] flex items-center bg-black border-t border-[#666] text-[#cfcfcf] font-bold">
    <div className="ml-[2px] w-[60px] text-[29px] leading-none">Dyn</div>
    <svg width={18} height={30} viewBox="0 0 18 30" fill="none" stroke="#bbb">
      <rect x={1} y={6} width={16} height={20} fill="#555" />
      <path d="M6 15v-3a3 3 0 0 1 6 0v3M5 15h8v6H5z" />
    </svg>
    <div className="ml-[3px] w-[200px] h-[31px] bg-[#666] text-white font-normal flex items-center justify-center whitespace-nowrap">5:00 23/06/2016</div>
    <div className="relative flex-1 h-full">
      {[["27", 363], ["jul.", 1088], ["06", 1655], ["08", 2020], ["11", 2232]].map(([s, x]) => (
        <span key={s} className="absolute top-[3px] -translate-x-1/2 leading-[30px]" style={{ left: (x as number) - 286 }}>{s}</span>
      ))}
    </div>
  </div>
);

export default function App() {
  return (
    <div className="w-[3200px] h-[1700px] overflow-hidden bg-[#3a3a3a] font-['Liberation_Sans',Arial,sans-serif] text-[26.67px]">
      <TitleBar />
      <ToolBar />
      <div className="h-[3px] bg-[#4a4a4a]" />
      <div className="ml-[3px] w-[3193px] flex flex-col">
        <div className="flex h-[1202px]">
          <div className="relative w-[3035px] h-[1202px] bg-[#0d0d0d] overflow-hidden">
            <MainChart />
            <div className="absolute left-[7px] top-[5px] text-[28px] text-[#cfcfcf] whitespace-nowrap leading-[32px]">
              <div>* MXN A0-FX, MEXICO PESO - NEW COMPOSITE, 60, 19:00-19:00 (Dynamic)</div>
              <div>Bollinger Bands - MXN A0-FX, 60</div>
              <div>Moving Average - MXN A0-FX, 60</div>
            </div>
            <DataWindow />
            <div className="absolute left-[5px] bottom-0 text-[23px] leading-[24px] text-[#8a8a8a]">© eSignal, 2016</div>
          </div>
          <PriceAxis />
        </div>
        <Tabs />
        <div className="flex h-[275px]">
          <div className="relative w-[3035px] h-[275px] bg-[#0d0d0d]">
            <StochChart />
            <div className="absolute left-[7px] top-[4px] text-[28px] text-[#cfcfcf] whitespace-nowrap leading-[32px]">* Stochastic - MXN A0-FX, 60</div>
          </div>
          <StochAxis />
        </div>
        <DateAxis />
      </div>
    </div>
  );
}
